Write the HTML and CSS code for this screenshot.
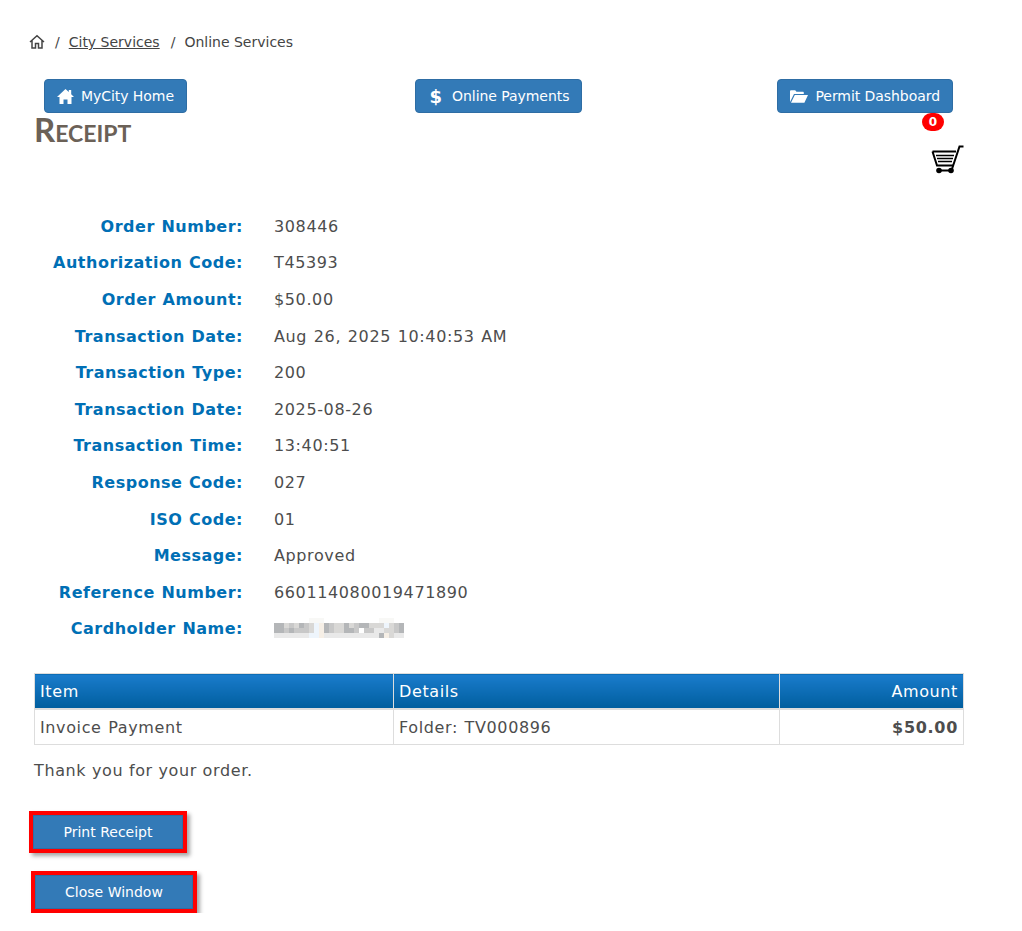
FILE: index.html

```html
<!DOCTYPE html>
<html lang="en">
<head>
  <meta charset="UTF-8">
  <meta name="viewport" content="width=device-width, initial-scale=1.0">
  <title>Receipt</title>
  <link rel="stylesheet" href="styles.css">
</head>
<body>
  <nav class="breadcrumb">
    <svg class="crumb-home" viewBox="0 0 16 16" width="16" height="16"><path d="M1 8l7-6.200L15 8M3 6.500V14h3.500V9.500h3V14H13V6.500" fill="none" stroke="#444" stroke-width="1.500"/></svg>
    <span class="sep">/</span>
    <a href="#">City Services</a>
    <span class="sep">/</span>
    <span>Online Services</span>
  </nav>

  <div class="top-buttons">
    <a class="btn btn-left" href="#">
      <svg class="btn-icon" viewBox="0 0 17 15" width="17" height="15"><path d="M8.500 0L0 8h2.500v7h4v-4.500h4V15h4V8H17l-2.800-2.700V1h-2.400v2.100z" fill="#fff"/></svg>
      MyCity Home
    </a>
    <a class="btn btn-mid" href="#"><span class="dollar">$</span> Online Payments</a>
    <a class="btn btn-right" href="#">
      <svg class="btn-icon" viewBox="0 0 18 13" width="18" height="13"><path d="M0 12V1.500C0 .8.500.3 1.200.3h4l1.300 1.500h6.300c.6 0 1 .4 1 1V4H4L0 12zM4.800 5H18l-3.600 7.700H1z" fill="#fff"/></svg>
      Permit Dashboard
    </a>
  </div>

  <div class="title-row">
    <h1>Receipt</h1>
    <div class="cart">
      <span class="badge">0</span>
      <svg class="cart-icon" viewBox="0 0 33 30" width="33" height="30">
        <path d="M1.500 6.500H25M1.500 6.500L6 20.500h16.500" fill="none" stroke="#000" stroke-width="2"/>
        <path d="M32.500 1.500h-4L20.500 25.500" fill="none" stroke="#000" stroke-width="2"/>
        <path d="M5 10.500h18M6 13.500h16M7 16.500h14" stroke="#000" stroke-width="1.400"/>
        <path d="M8 25.500h13" stroke="#000" stroke-width="2"/>
        <circle cx="8" cy="25.500" r="2.800"/><circle cx="20" cy="25.500" r="2.800"/>
      </svg>
    </div>
  </div>

  <dl class="details">
    <dt>Order Number:</dt><dd>308446</dd>
    <dt>Authorization Code:</dt><dd>T45393</dd>
    <dt>Order Amount:</dt><dd>$50.00</dd>
    <dt>Transaction Date:</dt><dd>Aug 26, 2025 10:40:53 AM</dd>
    <dt>Transaction Type:</dt><dd>200</dd>
    <dt>Transaction Date:</dt><dd>2025-08-26</dd>
    <dt>Transaction Time:</dt><dd>13:40:51</dd>
    <dt>Response Code:</dt><dd>027</dd>
    <dt>ISO Code:</dt><dd>01</dd>
    <dt>Message:</dt><dd>Approved</dd>
    <dt>Reference Number:</dt><dd>660114080019471890</dd>
    <dt>Cardholder Name:</dt>
    <dd>
      <svg class="redacted" viewBox="0 0 26 4" width="130" height="20" preserveAspectRatio="none" shape-rendering="crispEdges">
        <path d="M7 0h3v1H7zM21 0h3v1h-3z" fill="#f8f8f6"/>
        <path d="M0 1h2v2H0zM5 1h1v1H5zM10 1h1v2h-1zM14 1h1v2h-1zM17 1h2v1h-2zM25 1h1v2h-1zM3 2h1v1H3zM15 2h1v1h-1zM21 3h1v1h-1z" fill="#b4b6b8"/>
        <path d="M3 1h1v1H3zM6 1h1v2H6zM2 2h1v1H2zM4 2h2v1H4zM11 1h1v2h-1zM16 1h1v2h-1zM18 2h2v1h-2zM24 1h1v2h-1z" fill="#c8c8c8"/>
        <path d="M2 1h1v1H2zM4 1h1v1H4zM7 1h1v2H7zM12 1h2v2h-2zM15 1h1v1h-1zM19 1h1v1h-1zM20 1h2v1h-2zM23 1h1v3h-1zM22 2h1v1h-1z" fill="#d9d8d6"/>
        <path d="M0 3h7v1H0zM10 3h11v1H10zM24 3h2v1h-2zM20 2h2v1h-2z" fill="#e9e9e9"/>
        <path d="M8 1h1v3H8zM22 1h1v1h-1zM7 3h1v1H7z" fill="#eef5fc"/>
        <path d="M9 1h1v3H9zM22 3h1v1h-1z" fill="#f6efe6"/>
      </svg>
    </dd>
  </dl>

  <table class="items">
    <thead>
      <tr><th class="col-item">Item</th><th class="col-details">Details</th><th class="num">Amount</th></tr>
    </thead>
    <tbody>
      <tr><td>Invoice Payment</td><td>Folder: TV000896</td><td class="num total">$50.00</td></tr>
    </tbody>
  </table>

  <p class="thanks">Thank you for your order.</p>

  <div class="actions">
    <a class="btn-action print" href="#">Print Receipt</a>
    <a class="btn-action close" href="#">Close Window</a>
  </div>
</body>
</html>
```

FILE: styles.css

```css
body { margin: 0; padding: 0 58px 0 34px; background: #fff; color: #4d4d4d; font-family: "DejaVu Sans", Verdana, sans-serif; font-size: 16px; letter-spacing: .62px; }
a { color: inherit; }

.breadcrumb { display: flex; align-items: center; height: 20px; margin: 32px 0 0 -5px; font-size: 14px; letter-spacing: 0; color: #444; }
.crumb-home { margin-right: 10px; }
.breadcrumb .sep { margin-right: 9px; }
.breadcrumb a { margin-right: 11px; }

.top-buttons { display: grid; grid-template-columns: 1fr auto 1fr; padding: 0 11px 0 10px; margin-top: 27px; }
.btn { display: inline-flex; align-items: center; height: 34px; box-sizing: border-box; padding: 0 12px; background: #337ab7; border: 1px solid #2e6da4; border-radius: 4px; color: #fff; font-size: 14px; letter-spacing: -.06px; text-decoration: none; white-space: nowrap; }
.btn-left { justify-self: start; }
.btn-right { justify-self: end; }
.btn-icon { margin-right: 7px; }
.dollar { font-weight: bold; font-size: 18px; margin: 0 10px 0 2px; }

.title-row { display: flex; justify-content: space-between; align-items: flex-start; }
h1 { margin: -2px 0 0; font-family: "Lato", sans-serif; font-size: 33px; line-height: 36px; font-weight: bold; font-variant: small-caps; letter-spacing: 0; color: #6b6157; }
.cart { display: flex; flex-direction: column; align-items: flex-end; }
.badge { width: 22px; height: 18px; margin-right: 20px; border-radius: 9px; background: #f00; color: #fff; font-size: 12px; font-weight: bold; letter-spacing: 0; line-height: 18px; text-align: center; }
.cart-icon { display: block; margin-top: 14px; }

.details { display: grid; grid-template-columns: 209px 1fr; column-gap: 31px; grid-auto-rows: 36.6px; align-items: center; margin: 33px 0 0; }
.details dt { color: #006fb5; font-weight: bold; text-align: right; letter-spacing: .5px; word-spacing: .6px; }
.details dd { margin: 0; word-spacing: 1px; }
.redacted { display: block; margin-bottom: 2px; }

.items { width: 930px; margin-top: 26px; border-collapse: collapse; table-layout: fixed; }
.items th, .items td { padding: 0 5px; height: 34px; border: 1px solid #ddd; text-align: left; font-weight: normal; word-spacing: 1px; }
.items th { background: linear-gradient(#1a7ccc, #005e9e); color: #fff; border-bottom-width: 2px; }
.col-item { width: 348px; }
.col-details { width: 375px; }
.items .num { text-align: right; }
.items .total { font-weight: bold; letter-spacing: .7px; }

.thanks { margin: 16px 0 0; line-height: 20px; }

.actions { display: flex; flex-direction: column; align-items: flex-start; gap: 18px; margin: 30px 0 0 -5px; }
.btn-action { display: block; box-sizing: border-box; height: 42px; border: 4px solid #f00; background: #337ab7; color: #fff; font-size: 14px; letter-spacing: 0; line-height: 34px; text-align: center; text-decoration: none; box-shadow: 3px 3px 4px rgba(0,0,0,.35), inset 0 0 0 1px #2e6da4; }
.print { width: 158px; }
.close { width: 166px; margin-left: 2px; }
```
